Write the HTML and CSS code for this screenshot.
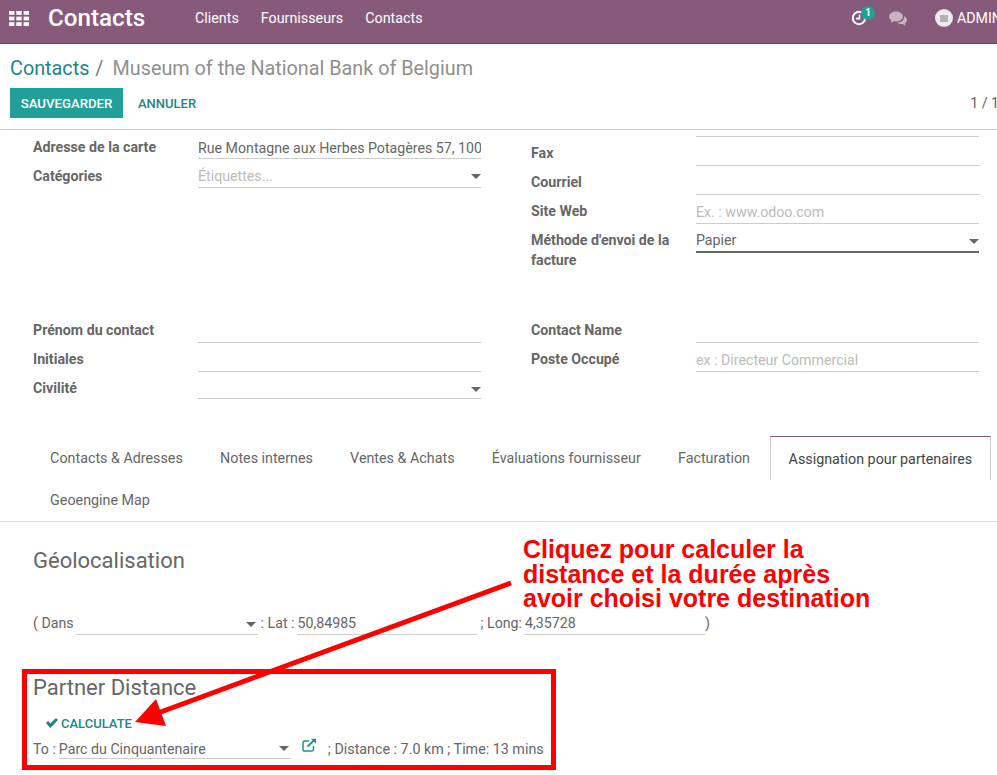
FILE: index.html
```html
<!DOCTYPE html>
<html lang="fr">
<head>
<meta charset="utf-8">
<title>Contacts</title>
<link rel="stylesheet" href="styles.css">
</head>
<body>
<header class="navbar">
  <svg class="apps" width="20" height="15" viewBox="0 0 20 15" fill="#fff"><rect x="0" y="0" width="5.4" height="3.8"/><rect x="7.3" y="0" width="5.4" height="3.8"/><rect x="14.6" y="0" width="5.4" height="3.8"/><rect x="0" y="5.6" width="5.4" height="3.8"/><rect x="7.3" y="5.6" width="5.4" height="3.8"/><rect x="14.6" y="5.6" width="5.4" height="3.8"/><rect x="0" y="11.2" width="5.4" height="3.8"/><rect x="7.3" y="11.2" width="5.4" height="3.8"/><rect x="14.6" y="11.2" width="5.4" height="3.8"/></svg>
  <span class="brand">Contacts</span>
  <nav class="menu"><span>Clients</span><span>Fournisseurs</span><span>Contacts</span></nav>
  <div class="systray">
    <span class="activity">
      <svg width="16" height="16" viewBox="0 0 16 16" fill="none" stroke="#fff"><circle cx="8" cy="8" r="6.2" stroke-width="2"/><path d="M8.500 4.500V8.600H5" stroke-width="1.600"/></svg>
      <span class="badge">1</span>
    </span>
    <svg class="chat" width="18" height="15" viewBox="0 0 18 15" fill="#c9b2c2"><ellipse cx="7" cy="5.500" rx="7" ry="5"/><path d="M2.500 8.500 2 12l4-2.500z"/><path d="M15 5.200c1.900.9 3 2.300 3 3.900 0 1.300-.8 2.500-2 3.300l.4 2.400-3-1.900c-2 .2-4-.3-5-1.500 3.800.1 7.400-2.100 6.600-6.200z"/></svg>
    <span class="avatar"><span class="avatar-inner"></span></span>
    <span class="user">ADMIN</span>
  </div>
</header>

<section class="panel">
  <div class="crumbs"><a>Contacts</a><span class="sep">/</span><span class="current">Museum of the National Bank of Belgium</span></div>
  <div class="actions">
    <button class="btn-primary">SAUVEGARDER</button>
    <button class="btn-link">ANNULER</button>
    <span class="pager">1 / 1</span>
  </div>
</section>

<main class="sheet">
  <div class="columns top">
    <div class="col">
      <div class="row"><label class="low">Adresse de la carte</label><div class="field low">Rue Montagne aux Herbes Potagères 57, 1000 Bruxelles</div></div>
      <div class="row"><label class="mid">Catégories</label><div class="field placeholder caret">Étiquettes...</div></div>
    </div>
    <div class="col">
      <div class="stub"></div>
      <div class="row"><label>Fax</label><div class="field"></div></div>
      <div class="row"><label>Courriel</label><div class="field"></div></div>
      <div class="row"><label>Site Web</label><div class="field placeholder">Ex. : www.odoo.com</div></div>
      <div class="row"><label class="wrap">Méthode d'envoi de la facture</label><div class="field caret focus">Papier</div></div>
    </div>
  </div>

  <div class="columns second">
    <div class="col">
      <div class="row"><label>Prénom du contact</label><div class="field"></div></div>
      <div class="row"><label>Initiales</label><div class="field"></div></div>
      <div class="row"><label>Civilité</label><div class="field caret short"></div></div>
    </div>
    <div class="col">
      <div class="row"><label>Contact Name</label><div class="field"></div></div>
      <div class="row"><label>Poste Occupé</label><div class="field placeholder">ex : Directeur Commercial</div></div>
    </div>
  </div>

  <div class="tabs">
    <span class="tab">Contacts &amp; Adresses</span>
    <span class="tab">Notes internes</span>
    <span class="tab">Ventes &amp; Achats</span>
    <span class="tab">Évaluations fournisseur</span>
    <span class="tab">Facturation</span>
    <span class="tab active">Assignation pour partenaires</span>
    <span class="tab">Geoengine Map</span>
  </div>

  <div class="pane">
    <h2 class="geo-title">Géolocalisation</h2>
    <div class="geo-line">
      <span>( Dans</span>
      <span class="inline caret w-dans"></span>
      <span>: Lat :</span>
      <span class="inline w-lat">50,84985</span>
      <span>; Long:</span>
      <span class="inline w-long">4,35728</span>
      <span>)</span>
    </div>
    <h2 class="dist-title">Partner Distance</h2>
    <div class="calc">
      <svg width="12" height="10" viewBox="0 0 12 10" fill="#21817f"><path d="M0 5.100 2 3 4.300 5.400 10 0 12 2 4.300 10z"/></svg>
      <span>CALCULATE</span>
    </div>
    <div class="to-line">
      <span>To :</span>
      <span class="inline caret w-to">Parc du Cinquantenaire</span>
      <svg class="ext" width="15" height="14" viewBox="0 0 15 14" fill="none" stroke="#21918f" stroke-width="1.500"><path d="M11.500 8v3.200a1.800 1.800 0 0 1-1.800 1.800H2.800A1.800 1.800 0 0 1 1 11.200V4.800A1.800 1.800 0 0 1 2.800 3H7"/><path d="M5.500 8.500 13 1.500" stroke-width="1.800"/><path d="M9 .8h5v5z" fill="#21918f" stroke="none"/></svg>
      <span class="dist">; Distance : 7.0 km ; Time: 13 mins</span>
    </div>
  </div>
</main>

<div class="note">Cliquez pour calculer la<br>distance et la durée après<br>avoir choisi votre destination</div>
<div class="red-box"></div>
<svg class="arrow" width="997" height="775" viewBox="0 0 997 775"><path d="M511 583 158 713" stroke="#f00" stroke-width="5" fill="none"/><path d="M135 722 156 699 166 726z" fill="#f00"/></svg>
</body>
</html>
```
FILE: styles.css
```css
* { box-sizing: border-box; }
html, body { margin: 0; height: 775px; overflow: hidden; }
body { font-family: Roboto, "Liberation Sans", sans-serif; font-size: 14.2px; color: #666; background: #fff; position: relative; width: 997px; }

.navbar { height: 44px; padding-bottom: 7px; background: #875a7b; border-bottom: 1px solid #6b4762; display: flex; align-items: center; color: #fff; white-space: nowrap; overflow: hidden; }
.apps { margin-left: 9px; flex: none; }
.brand { font-size: 24.2px; font-weight: 500; margin-left: 19px; width: 147px; flex: none; }
.menu { display: flex; gap: 22px; font-size: 14.3px; }
.systray { margin-left: auto; display: flex; align-items: center; flex: none; width: 146px; }
.activity { position: relative; display: block; width: 16px; height: 16px; flex: none; }
.activity svg { display: block; }
.badge { position: absolute; left: 10px; top: -4px; width: 14px; height: 14px; border-radius: 50%; background: #21a09a; color: #fff; font-size: 10px; font-weight: 700; text-align: center; line-height: 14px; }
.chat { margin-left: 22px; flex: none; }
.avatar { margin-left: 28px; width: 18px; height: 18px; border-radius: 50%; background: #efeaee; flex: none; display: flex; align-items: center; justify-content: center; }
.avatar-inner { width: 8px; height: 7px; background: #b9adb6; }
.user { margin-left: 4px; flex: none; }

.panel { height: 86px; border-bottom: 1px solid #ccc; padding: 0 10px; }
.crumbs { font-size: 19.8px; line-height: 24px; padding-top: 13px; height: 44px; white-space: nowrap; }
.crumbs a { color: #21858a; }
.sep { color: #777; margin: 0 9px 0 6px; }
.current { color: #8f8f8f; }
.actions { display: flex; align-items: center; height: 30px; white-space: nowrap; }
.btn-primary { height: 30px; width: 113px; background: #21a09a; color: #fff; border: 0; padding: 1px 0 0; font: 500 13.2px Roboto, sans-serif; }
.btn-link { background: none; border: 0; padding: 1px 0 0; margin-left: 15px; font: 500 13px Roboto, sans-serif; color: #21858a; }
.pager { margin-left: auto; margin-right: -12px; }

.sheet { height: 645px; overflow: hidden; }
.columns { display: grid; grid-template-columns: 448px 448px; column-gap: 50px; padding-left: 33px; }
.top { height: 177px; }
.second { height: 123px; margin-top: 7px; }
.col { min-width: 0; }
.row { display: grid; grid-template-columns: 165px 283px; min-height: 29px; }
.row label { font-weight: 700; line-height: 20px; padding-top: 6px; white-space: nowrap; }
.row label.low, .row label.mid { padding-top: 7px; }
.row label.wrap { white-space: normal; padding-right: 10px; }
.field { height: 29px; border-bottom: 1px solid #ccc; line-height: 20px; padding-top: 7px; position: relative; white-space: nowrap; overflow: hidden; }
.field.low { padding-top: 8px; }
.placeholder { color: #bbb; }
.focus { border-bottom: 2px solid #666; padding-top: 6px; }
.short { height: 27px; }
.stub { height: 7px; width: 283px; margin-left: 165px; border-bottom: 1px solid #ccc; }
.caret::after { content: ""; position: absolute; right: 0; top: 15px; border: 5px solid transparent; border-top-color: #666; border-bottom: 0; }

.tabs { display: flex; flex-wrap: wrap; height: 86px; border-bottom: 1px solid #ddd; padding-left: 31.5px; margin-top: -1px; align-content: flex-start; font-size: 14.3px; }
.tab { height: 44px; padding: 12px 18.6px 0; line-height: 20px; white-space: nowrap; margin-bottom: -2px; }
.tab.active { color: #444; border: 1px solid #ccc; border-top: 1px solid #875a7b; border-bottom: 0; background: #fff; padding: 12px 18px 0; margin-left: 1px; }

.pane { padding-left: 33px; }
.geo-title, .dist-title { font-weight: 400; margin: 0; }
.geo-title { font-size: 22px; line-height: 26px; padding-top: 26px; }
.geo-line { display: flex; align-items: flex-end; height: 24px; margin-top: 37px; line-height: 20px; white-space: nowrap; }
.geo-line > span:not(.inline) { padding-bottom: 2px; }
.geo-line .inline { padding-top: 2px; }
.inline { display: block; position: relative; height: 24px; border-bottom: 1px solid #ccc; padding-top: 4px; flex: none; }
.inline.caret::after { top: 11px; right: 2px; }
.w-dans { width: 181px; margin: 0 3px; }
.w-lat { width: 180px; margin-left: 3px; margin-right: 3px; }
.w-long { width: 180px; margin-left: 3px; }
.dist-title { font-size: 22px; line-height: 26px; margin-top: 40px; }
.calc { display: flex; align-items: center; gap: 3px; margin: 12px 0 0 13px; height: 20px; color: #21858a; font-size: 13px; font-weight: 500; }
.to-line { display: flex; align-items: flex-end; height: 24px; margin-top: 2px; line-height: 20px; white-space: nowrap; }
.w-to { width: 232px; margin-left: 3px; }
.ext { margin: 0 0 7px 11px; flex: none; }
.dist { margin-left: 11px; font-size: 14.3px; }

.note { position: absolute; left: 523px; top: 537px; color: #f00; font: 700 25px/24.6px "Liberation Sans", sans-serif; white-space: nowrap; }
.red-box { position: absolute; left: 22px; top: 669px; width: 534px; height: 101px; border: 5px solid #f00; }
.arrow { position: absolute; left: 0; top: 0; pointer-events: none; }
```
